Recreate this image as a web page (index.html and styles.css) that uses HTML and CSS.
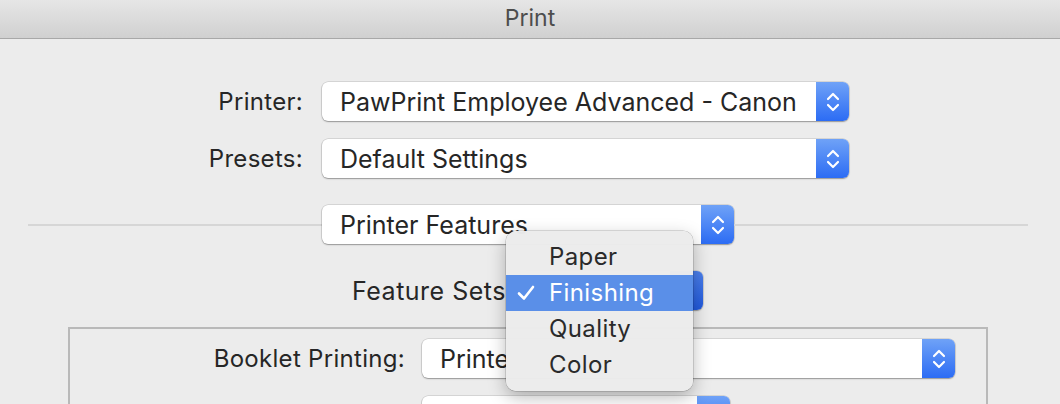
FILE: index.html
```html
<!DOCTYPE html>
<html lang="en">
<head>
    <meta charset="UTF-8">
    <title>Print</title>
    <link rel="stylesheet" href="styles.css">
</head>
<body>
    <div class="titlebar">Print</div>

    <div class="dialog">
        <div class="field-row">
            <span class="field-label">Printer:</span>
            <div class="popup popup-wide">
                <span class="popup-text">PawPrint Employee Advanced - Canon</span>
                <span class="stepper">
                    <svg viewBox="0 0 14 22" fill="none" stroke="#fff" stroke-width="2.2" stroke-linecap="round" stroke-linejoin="round"><polyline points="2 8 7 3 12 8"/><polyline points="2 14 7 19 12 14"/></svg>
                </span>
            </div>
        </div>

        <div class="field-row">
            <span class="field-label">Presets:</span>
            <div class="popup popup-wide">
                <span class="popup-text">Default Settings</span>
                <span class="stepper">
                    <svg viewBox="0 0 14 22" fill="none" stroke="#fff" stroke-width="2.2" stroke-linecap="round" stroke-linejoin="round"><polyline points="2 8 7 3 12 8"/><polyline points="2 14 7 19 12 14"/></svg>
                </span>
            </div>
        </div>

        <div class="section-row">
            <div class="rule"></div>
            <div class="popup popup-section">
                <span class="popup-text">Printer Features</span>
                <span class="stepper">
                    <svg viewBox="0 0 14 22" fill="none" stroke="#fff" stroke-width="2.2" stroke-linecap="round" stroke-linejoin="round"><polyline points="2 8 7 3 12 8"/><polyline points="2 14 7 19 12 14"/></svg>
                </span>
            </div>
            <div class="rule"></div>
        </div>

        <div class="feature-row">
            <span class="feature-label">Feature Sets</span>
            <div class="popup popup-feature">
                <span class="popup-text"></span>
                <span class="stepper stepper-dark"></span>
            </div>
        </div>

        <div class="group-box">
            <div class="box-row">
                <span class="field-label">Booklet Printing:</span>
                <div class="popup popup-booklet">
                    <span class="popup-text">Printe</span>
                    <span class="stepper">
                        <svg viewBox="0 0 14 22" fill="none" stroke="#fff" stroke-width="2.2" stroke-linecap="round" stroke-linejoin="round"><polyline points="2 8 7 3 12 8"/><polyline points="2 14 7 19 12 14"/></svg>
                    </span>
                </div>
            </div>
            <div class="box-row">
                <span class="field-label"></span>
                <div class="popup popup-short">
                    <span class="popup-text"></span>
                    <span class="stepper"></span>
                </div>
            </div>
        </div>

        <!-- open menu of the Feature Sets popup -->
        <ul class="menu">
            <li class="menu-item">Paper</li>
            <li class="menu-item selected">
                <svg class="check" viewBox="0 0 20 20" fill="none" stroke="#fff" stroke-width="2.6" stroke-linecap="round" stroke-linejoin="round"><polyline points="3 10.5 8 15.5 17 4"/></svg>
                Finishing
            </li>
            <li class="menu-item">Quality</li>
            <li class="menu-item">Color</li>
        </ul>
    </div>
</body>
</html>
```

FILE: styles.css
```css
/* General */
body {
    margin: 0;
    padding: 0;
    width: 1060px;
    height: 404px;
    overflow: hidden;
    background: #ececec;
    font-family: 'Inter', 'Noto Sans', sans-serif;
    color: #262626;
}

.titlebar {
    height: 38px;
    line-height: 37px;
    text-align: center;
    font-size: 23px;
    color: #4d4d4d;
    background: linear-gradient(to bottom, #e6e6e6, #d0d0d0);
    border-bottom: 1px solid #a8a8a8;
}

.dialog {
    position: relative;
    height: 365px;
    overflow: hidden;
    padding-top: 43px;
    box-sizing: border-box;
}

/* Rows */
.field-row {
    display: grid;
    grid-template-columns: 303px 527px;
    column-gap: 19px;
    align-items: center;
    margin-bottom: 18px;
}

.field-label {
    text-align: right;
    font-size: 24px;
    letter-spacing: 0.3px;
}

/* Popup buttons */
.popup {
    height: 39px;
    display: flex;
    align-items: center;
    background: #ffffff;
    border-radius: 6px;
    box-shadow: 0 0 0 0.5px rgba(0, 0, 0, 0.18), 0 1px 1.5px rgba(0, 0, 0, 0.3);
    box-sizing: border-box;
    overflow: hidden;
}

.popup-text {
    flex: 1;
    padding-left: 18px;
    font-size: 25px;
    white-space: nowrap;
    overflow: hidden;
}

.stepper {
    width: 33px;
    height: 100%;
    display: flex;
    align-items: center;
    justify-content: center;
    background: linear-gradient(to bottom, #6fa2f7, #2c6cf4);
}

.stepper svg {
    width: 14px;
    height: 22px;
}

.stepper-dark {
    background: linear-gradient(to bottom, #4c80ec, #2159dc);
}

.popup-section {
    width: 412px;
}

/* Separator with section popup */
.section-row {
    display: flex;
    align-items: center;
    padding-left: 28px;
    margin-top: 27px;
}

.rule {
    width: 294px;
    height: 2px;
    background: #d6d6d6;
}

.feature-row {
    display: flex;
    align-items: center;
    padding-left: 352px;
    margin-top: 27px;
}

.feature-label {
    font-size: 25px;
    letter-spacing: 0.5px;
    width: 168px;
    white-space: nowrap;
}

.popup-feature {
    width: 183px;
}

/* Group box */
.group-box {
    margin: 17px 72px 0 68px;
    border: 2px solid #b9b9b9;
    border-bottom: none;
    padding-top: 10px;
    height: 80px;
}

.box-row {
    display: grid;
    grid-template-columns: 335px 533px;
    column-gap: 17px;
    align-items: center;
    margin-bottom: 18px;
}

.popup-short {
    width: 308px;
}

/* Open menu */
.menu {
    position: absolute;
    left: 506px;
    top: 192px;
    width: 187px;
    margin: 0;
    padding: 8px 0;
    list-style: none;
    box-sizing: border-box;
    background: rgba(236, 236, 236, 0.98);
    border-radius: 10px;
    box-shadow: 0 0 0 0.5px rgba(0, 0, 0, 0.25), 0 6px 18px rgba(0, 0, 0, 0.28);
}

.menu-item {
    position: relative;
    height: 36px;
    line-height: 36px;
    padding-left: 43px;
    font-size: 24px;
    letter-spacing: 0.4px;
    color: #2a2a2a;
}

.menu-item.selected {
    background: #5a8fe8;
    color: #ffffff;
}

.check {
    position: absolute;
    left: 10px;
    top: 8px;
    width: 20px;
    height: 20px;
}
```
